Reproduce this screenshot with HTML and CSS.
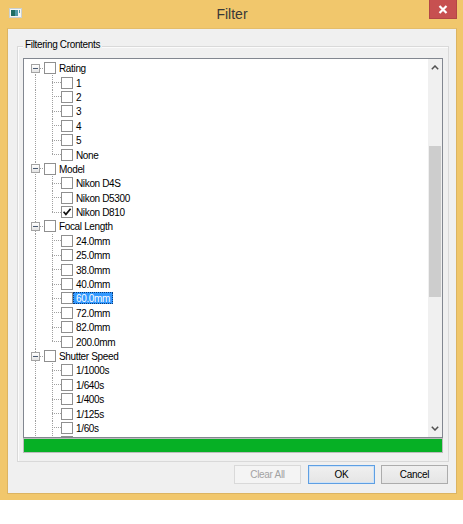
FILE: index.html
```html
<!DOCTYPE html>
<html>
<head>
<meta charset="utf-8">
<title>Filter</title>
<link rel="stylesheet" href="styles.css">
</head>
<body>
<div class="window">
  <div class="titlebar">
    <div class="tb-left">
      <svg class="app-icon" width="13" height="10" viewBox="0 0 13 10">
        <rect x="0.5" y="0.5" width="12" height="9" fill="#f4f6f6" stroke="#c9d0d2"/>
        <rect x="2" y="2" width="4" height="6" fill="#1f6e63"/>
        <rect x="6" y="2" width="3" height="6" fill="#4f9aa6"/>
        <rect x="10" y="2" width="1" height="3" fill="#4f9aa6"/>
      </svg>
    </div>
    <div class="title">Filter</div>
    <div class="tb-right">
      <div class="close">
        <svg width="10" height="9" viewBox="0 0 10 9">
          <path d="M1.5 1 L8.5 8 M8.5 1 L1.5 8" stroke="#fff" stroke-width="2.2" fill="none"/>
        </svg>
      </div>
    </div>
  </div>
  <div class="client">
    <div class="group">
      <div class="group-label">Filtering Crontents</div>
      <div class="tree">
        <div class="tcontent">
          <div class="row parent first"><span class="exp"></span><span class="cb"></span><span class="lbl">Rating</span></div>
          <div class="row child"><span class="cb"></span><span class="lbl">1</span></div>
          <div class="row child"><span class="cb"></span><span class="lbl">2</span></div>
          <div class="row child"><span class="cb"></span><span class="lbl">3</span></div>
          <div class="row child"><span class="cb"></span><span class="lbl">4</span></div>
          <div class="row child"><span class="cb"></span><span class="lbl">5</span></div>
          <div class="row child last"><span class="cb"></span><span class="lbl">None</span></div>
          <div class="row parent"><span class="exp"></span><span class="cb"></span><span class="lbl">Model</span></div>
          <div class="row child"><span class="cb"></span><span class="lbl">Nikon D4S</span></div>
          <div class="row child"><span class="cb"></span><span class="lbl">Nikon D5300</span></div>
          <div class="row child last"><span class="cb checked"><svg width="10" height="10" viewBox="0 0 10 10"><path d="M1.6 4.8 L3.9 7.4 L8.6 1.8" stroke="#111" stroke-width="1.7" fill="none"/></svg></span><span class="lbl">Nikon D810</span></div>
          <div class="row parent"><span class="exp"></span><span class="cb"></span><span class="lbl">Focal Length</span></div>
          <div class="row child"><span class="cb"></span><span class="lbl">24.0mm</span></div>
          <div class="row child"><span class="cb"></span><span class="lbl">25.0mm</span></div>
          <div class="row child"><span class="cb"></span><span class="lbl">38.0mm</span></div>
          <div class="row child"><span class="cb"></span><span class="lbl">40.0mm</span></div>
          <div class="row child"><span class="cb"></span><span class="lbl selected">60.0mm</span></div>
          <div class="row child"><span class="cb"></span><span class="lbl">72.0mm</span></div>
          <div class="row child"><span class="cb"></span><span class="lbl">82.0mm</span></div>
          <div class="row child last"><span class="cb"></span><span class="lbl">200.0mm</span></div>
          <div class="row parent"><span class="exp"></span><span class="cb"></span><span class="lbl">Shutter Speed</span></div>
          <div class="row child"><span class="cb"></span><span class="lbl">1/1000s</span></div>
          <div class="row child"><span class="cb"></span><span class="lbl">1/640s</span></div>
          <div class="row child"><span class="cb"></span><span class="lbl">1/400s</span></div>
          <div class="row child"><span class="cb"></span><span class="lbl">1/125s</span></div>
          <div class="row child"><span class="cb"></span><span class="lbl">1/60s</span></div>
          <div class="row child"><span class="cb"></span></div>
        </div>
        <div class="scroll">
          <div class="sbtn">
            <svg width="8" height="5" viewBox="0 0 8 5"><path d="M0.8 4.2 L4 1 L7.2 4.2" stroke="#505050" stroke-width="1.5" fill="none"/></svg>
          </div>
          <div class="track"><div class="thumb"></div></div>
          <div class="sbtn">
            <svg width="8" height="5" viewBox="0 0 8 5"><path d="M0.8 0.8 L4 4 L7.2 0.8" stroke="#505050" stroke-width="1.5" fill="none"/></svg>
          </div>
        </div>
      </div>
      <div class="progress"></div>
    </div>
    <div class="buttons">
      <div class="btn disabled">Clear All</div>
      <div class="btn default">OK</div>
      <div class="btn">Cancel</div>
    </div>
  </div>
</div>
</body>
</html>
```
FILE: styles.css
```css
* { box-sizing: border-box; }
html, body { margin: 0; padding: 0; background: #ffffff; }
body {
  width: 463px;
  height: 524px;
  overflow: hidden;
  font-family: "Liberation Sans", Arial, sans-serif;
  font-size: 10px;
  letter-spacing: -0.35px;
  color: #000;
}
.window {
  width: 463px;
  height: 500px;
  background: #f1c76c;
  display: flex;
  flex-direction: column;
}
.titlebar {
  height: 28px;
  flex: none;
  display: grid;
  grid-template-columns: 1fr auto 1fr;
  align-items: start;
}
.tb-left { padding: 8px 0 0 9px; display: flex; }
.app-icon { display: block; }
.title {
  font-size: 14px;
  letter-spacing: 0;
  color: #383838;
  line-height: 16px;
  padding-top: 6px;
  padding-left: 1px;
}
.tb-right { display: flex; justify-content: flex-end; padding-right: 6px; }
.close {
  width: 28px;
  height: 19px;
  background: #c75050;
  border: 1px solid #b34646;
  border-top: none;
  display: flex;
  align-items: center;
  justify-content: center;
}
.close svg { display: block; }
.client {
  flex: 1;
  margin: 0 6px 6px 7px;
  background: #f0f0f0;
  border: 1px solid #dcb462;
  border-top-color: #e4bd6a;
  padding: 17px 0 0 9px;
  display: flex;
  flex-direction: column;
}
.group {
  width: 432px;
  height: 416px;
  border: 1px solid #d9d9d9;
  box-shadow: inset 1px 1px 0 #fbfbfb;
  display: flex;
  flex-direction: column;
  align-items: flex-start;
}
.group-label {
  margin: -8px 0 0 5px;
  padding: 0 2px 0 2px;
  line-height: 12px;
  height: 12px;
  background: #f0f0f0;
  color: #000;
}
.tree {
  margin: 7px 0 0 5px;
  width: 420px;
  height: 380px;
  border: 1px solid #828790;
  background: #fff;
  display: flex;
}
.tcontent {
  flex: 1;
  overflow: hidden;
  padding-top: 2px;
}
.row {
  height: 14.4px;
  display: flex;
  align-items: center;
  background-repeat: no-repeat;
}
.parent {
  padding-left: 7px;
  background-image:
    repeating-linear-gradient(to bottom, #a0a0a0 0 1px, transparent 1px 2px),
    repeating-linear-gradient(to right, #a0a0a0 0 1px, transparent 1px 2px);
  background-position: 11px 0, 16px 50%;
  background-size: 1px 100%, 4px 1px;
}
.parent.first {
  background-position: 11px 100%, 16px 50%;
  background-size: 1px 50%, 4px 1px;
}
.child {
  padding-left: 37px;
  background-image:
    repeating-linear-gradient(to bottom, #a0a0a0 0 1px, transparent 1px 2px),
    repeating-linear-gradient(to bottom, #a0a0a0 0 1px, transparent 1px 2px),
    repeating-linear-gradient(to right, #a0a0a0 0 1px, transparent 1px 2px);
  background-position: 11px 0, 28px 0, 28px 50%;
  background-size: 1px 100%, 1px 100%, 9px 1px;
}
.child.last {
  background-size: 1px 100%, 1px 50%, 9px 1px;
}
.exp {
  width: 9px;
  height: 9px;
  border: 1px solid #a3a3a3;
  background: linear-gradient(#ffffff, #e4e4e4);
  display: flex;
  align-items: center;
  justify-content: center;
  margin-right: 4px;
  flex: none;
}
.exp::before {
  content: "";
  display: block;
  width: 5px;
  height: 1px;
  background: #4a5a72;
}
.cb {
  width: 12px;
  height: 12px;
  border: 1px solid #8f8f8f;
  background: #fff;
  flex: none;
  display: flex;
  align-items: center;
  justify-content: center;
}
.cb svg { display: block; }
.lbl {
  padding: 0 2px;
  line-height: 11px;
  height: 12px;
  border: 1px solid transparent;
  white-space: nowrap;
}
.lbl.selected {
  background: #3399ff;
  color: #fff;
  border: 1px dotted #0a3c7a;
}
.scroll {
  width: 14px;
  flex: none;
  background: #f0f0f0;
  display: flex;
  flex-direction: column;
}
.sbtn {
  height: 17px;
  flex: none;
  display: flex;
  align-items: center;
  justify-content: center;
}
.sbtn svg { display: block; }
.track { flex: 1; }
.thumb {
  margin: 70px 1px 0 1px;
  height: 151px;
  background: #cdcdcd;
}
.progress {
  margin: 0 0 0 5px;
  width: 420px;
  height: 15px;
  border: 1px solid #bcbcbc;
  background: #06b025;
}
.buttons {
  display: flex;
  justify-content: flex-end;
  gap: 7px;
  padding-right: 8px;
  margin-top: 3px;
}
.btn {
  width: 67px;
  height: 19px;
  border: 1px solid #acacac;
  background: linear-gradient(#f0f0f0, #e5e5e5);
  display: flex;
  align-items: center;
  justify-content: center;
  color: #000;
  letter-spacing: -0.3px;
}
.btn.default {
  border-color: #5e9fe3;
  box-shadow: inset 0 0 0 1px #cfe3f7;
  margin-right: -1px;
}
.btn.disabled {
  border-color: #d9d9d9;
  background: #f4f4f4;
  color: #a2a2a2;
}
```
